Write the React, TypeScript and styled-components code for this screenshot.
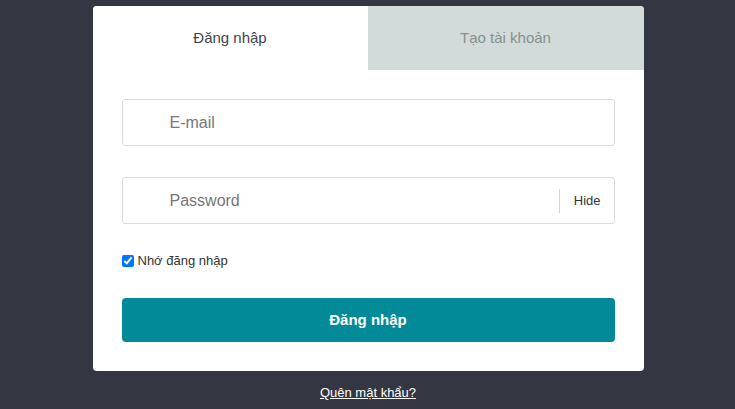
import styled, { createGlobalStyle } from 'styled-components';

const GlobalStyle = createGlobalStyle`
  html, body {
    margin: 0;
    padding: 0;
    background: #343642;
    font-family: "Liberation Sans", Arial, sans-serif;
  }
`;

const Page = styled.div`
  display: flex;
  flex-direction: column;
  align-items: center;
  padding-top: 6px;
`;

const Card = styled.div`
  width: 551px;
  background: #fff;
  border-radius: 4px;
  overflow: hidden;
  margin-left: 1px;
`;

const Tabs = styled.div`
  display: grid;
  grid-template-columns: 275px 1fr;
  height: 64px;
`;

const Tab = styled.div<{ $active?: boolean }>`
  display: flex;
  align-items: center;
  justify-content: center;
  font-size: 15px;
  padding-bottom: 2px;
  color: ${(p) => (p.$active ? '#3f4446' : '#85918f')};
  background: ${(p) => (p.$active ? '#fff' : '#d3dada')};
`;

const Form = styled.form`
  display: flex;
  flex-direction: column;
  padding: 29px;
`;

const Field = styled.div`
  display: flex;
  align-items: center;
  height: 47px;
  border: 1px solid #dcdcdc;
  border-radius: 3px;
  box-sizing: border-box;
  margin-bottom: 31px;
`;

const Input = styled.input`
  flex: 1;
  height: 100%;
  border: none;
  outline: none;
  background: transparent;
  padding: 0 0 0 47px;
  font-family: inherit;
  font-size: 16px;
  color: #333;

  &::placeholder {
    color: #767676;
  }
`;

const Toggle = styled.button`
  align-self: center;
  height: 24px;
  border: none;
  border-left: 1px solid #d6d6d6;
  background: transparent;
  padding: 0 13px 0 14px;
  font-family: inherit;
  font-size: 13px;
  color: #333;
  cursor: pointer;
`;

const Remember = styled.label`
  display: flex;
  align-items: center;
  gap: 4px;
  font-size: 13px;
  color: #333;
  margin-top: -2px;
  margin-bottom: 30px;

  input {
    margin: 0;
    width: 12px;
    height: 12px;
    accent-color: #0075ff;
  }
`;

const Submit = styled.button`
  height: 44px;
  border: none;
  border-radius: 4px;
  background: #028a99;
  color: #fff;
  font-family: inherit;
  font-size: 15px;
  font-weight: bold;
  padding-bottom: 2px;
  cursor: pointer;
`;

const Forgot = styled.a`
  margin-top: 14px;
  margin-left: 1px;
  font-size: 13px;
  color: #fff;
  text-decoration: underline;
`;

export default function App() {
  return (
    <>
      <GlobalStyle />
      <Page>
        <Card>
          <Tabs>
            <Tab $active>Đăng nhập</Tab>
            <Tab>Tạo tài khoản</Tab>
          </Tabs>
          <Form onSubmit={(e) => e.preventDefault()}>
            <Field>
              <Input type="email" placeholder="E-mail" />
            </Field>
            <Field>
              <Input type="password" placeholder="Password" />
              <Toggle type="button">Hide</Toggle>
            </Field>
            <Remember>
              <input type="checkbox" defaultChecked />
              Nhớ đăng nhập
            </Remember>
            <Submit type="submit">Đăng nhập</Submit>
          </Form>
        </Card>
        <Forgot href="#">Quên mật khẩu?</Forgot>
      </Page>
    </>
  );
}
